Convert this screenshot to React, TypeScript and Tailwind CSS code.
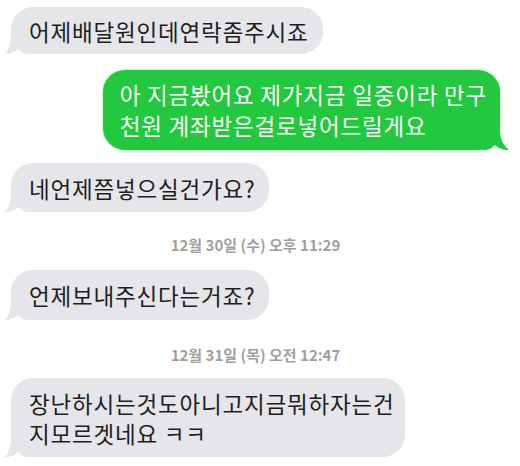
import React from "react";

const font = { fontFamily: '"Noto Sans CJK KR", "Noto Sans", sans-serif' };

function LeftTail() {
  return (
    <svg
      className="absolute -left-[6px] bottom-0"
      width="24"
      height="20"
      viewBox="0 0 24 20"
    >
      <path
        d="M6 0 C6 9 4 15 0 20 C5 20 10 18 13 15 C16 18 19 20 24 20 L24 0 Z"
        fill="#e5e5ea"
      />
    </svg>
  );
}

function RightTail() {
  return (
    <svg
      className="absolute -right-[9px] bottom-0"
      width="26"
      height="20"
      viewBox="0 0 26 20"
    >
      <path
        d="M17 0 C17 9 20 15 26 20 C20 20 15 18 12 15 C9 18 6 20 0 20 L0 0 Z"
        fill="#22c93e"
      />
    </svg>
  );
}

function Incoming({ children, className }: { children: React.ReactNode; className?: string }) {
  return (
    <div className={`relative self-start rounded-[22px] bg-[#e5e5ea] pl-[18px] text-[22.5px] leading-[30px] tracking-[0.8px] text-[#1d1d1f] ${className ?? ""}`}>
      <LeftTail />
      <div className="relative">{children}</div>
    </div>
  );
}

function Stamp({ children, className }: { children: React.ReactNode; className?: string }) {
  return (
    <div className={`self-center text-[15px] font-semibold leading-5 text-[#9e9ea3] ${className ?? ""}`}>
      {children}
    </div>
  );
}

export default function App() {
  return (
    <div className="flex h-[466px] w-[520px] flex-col overflow-hidden bg-white pl-[11px] pr-[20px] pt-[7px]" style={font}>
      <Incoming className="py-[8.5px] pr-[14px]">어제배달원인데연락좀주시죠</Incoming>

      <div className="relative mt-[16px] self-end rounded-[22px] bg-[#22c93e] py-[9px] pl-[17px] pr-[13px] text-[22.5px] leading-[31px] tracking-[0.8px] text-white shadow-[0_0_3px_#7dfb8f]">
        <RightTail />
        <div className="relative">
          아 지금봤어요 제가지금 일중이라 만구
          <br />
          천원 계좌받은걸로넣어드릴게요
        </div>
      </div>

      <Incoming className="mt-[13px] py-[9.5px] pr-[14px]">네언제쯤넣으실건가요?</Incoming>

      <Stamp className="mt-[23px]">12월 30일 (수) 오후 11:29</Stamp>

      <Incoming className="mt-[15px] py-[10px] pr-[14px]">언제보내주신다는거죠?</Incoming>

      <Stamp className="mt-[25px]">12월 31일 (목) 오전 12:47</Stamp>

      <Incoming className="mt-[13px] py-[9.5px] pr-[10px]">
        장난하시는것도아니고지금뭐하자는건
        <br />
        지모르겟네요 ㅋㅋ
      </Incoming>
    </div>
  );
}
